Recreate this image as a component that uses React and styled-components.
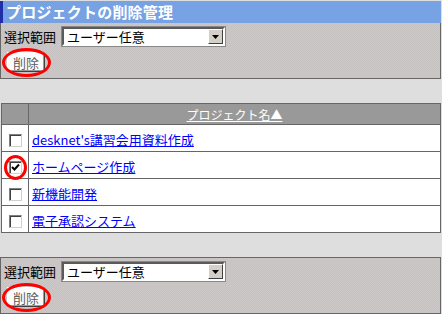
import React from "react";
import styled, { createGlobalStyle } from "styled-components";

const Global = createGlobalStyle`
  html, body { margin: 0; padding: 0; background: #dedede; }
  body { font-family: "Noto Sans CJK JP", "Noto Sans", sans-serif; }
`;

const Page = styled.div`
  width: 441px;
  display: flex;
  flex-direction: column;
`;

const TitleBar = styled.div`
  margin-top: 1px;
  height: 22px;
  border-left: 3px solid #1f2fa8;
  padding-left: 3px;
  background: repeating-conic-gradient(#79a5e5 0 25%, #74a0e1 0 50%) 0 0 / 2px 2px;
  color: #fff;
  font-size: 15px;
  font-weight: bold;
  line-height: 22px;
  letter-spacing: 0.2px;
  white-space: nowrap;
`;

const Panel = styled.div`
  border: 1px solid #666;
  border-top: ${(p) => (p.$closed ? "1px solid #666" : "none")};
  background: repeating-conic-gradient(#ccc8c8 0 25%, #c6c2c2 0 50%) 0 0 / 2px 2px;
  padding: 4px 3px 6px;
  margin-top: ${(p) => (p.$closed ? "24px" : "0")};
  display: flex;
  flex-direction: column;
  gap: 6px;
`;

const FormRow = styled.div`
  display: flex;
  align-items: center;
  gap: 6px;
  height: 19px;
`;

const Label = styled.span`
  font-size: 13px;
  color: #000;
  line-height: 1;
`;

const FakeSelect = styled.div`
  width: 163px;
  height: 19px;
  box-sizing: border-box;
  background: #fff;
  border: 2px solid;
  border-color: #5a5a5a #fff #fff #5a5a5a;
  outline: 1px solid #888;
  display: flex;
  align-items: stretch;
  font-size: 13px;
  color: #000;
`;

const SelectText = styled.span`
  flex: 1;
  padding-left: 3px;
  line-height: 15px;
`;

const SelectArrow = styled.span`
  width: 15px;
  background: #d4d0c8;
  border: 1px solid;
  border-color: #fff #404040 #404040 #fff;
  box-sizing: border-box;
  display: flex;
  align-items: center;
  justify-content: center;
`;

const Circled = styled.div`
  position: relative;
  display: flex;
  align-self: flex-start;
  margin-left: 3px;
`;

const Ring = styled.span`
  position: absolute;
  left: ${(p) => p.$l}px;
  top: ${(p) => p.$t}px;
  width: ${(p) => p.$w}px;
  height: ${(p) => p.$h}px;
  border: 3px solid #ff0000;
  border-radius: 50%;
  box-sizing: border-box;
  pointer-events: none;
`;

const DelButton = styled.button`
  width: 38px;
  height: 20px;
  padding: 0;
  box-sizing: border-box;
  background: #fcfcfc;
  border: 1px solid;
  border-color: #fff #404040 #404040 #fff;
  box-shadow: inset -1px -1px 0 #9a9a9a;
  font-family: "Noto Sans CJK JP", sans-serif;
  font-size: 13px;
  color: #5e5e5e;
  line-height: 1;
`;

const Table = styled.table`
  margin: 24px 0 0 1px;
  width: 440px;
  border-collapse: collapse;
  border: 1px solid #666;
  background: #fff;
`;

const HeadCell = styled.th`
  height: 20px;
  padding: 0;
  background: #999;
  border: 1px solid #666;
  font-weight: normal;
  font-size: 12px;
  color: #fff;
  text-align: center;
  width: ${(p) => (p.$narrow ? "26px" : "auto")};
`;

const HeadLink = styled.a`
  color: #fff;
  text-decoration: underline;
`;

const Cell = styled.td`
  height: 26px;
  padding: 0 0 0 ${(p) => (p.$narrow ? "0" : "3px")};
  border: 1px solid #666;
  text-align: ${(p) => (p.$narrow ? "center" : "left")};
  vertical-align: middle;
`;

const CheckWrap = styled.span`
  position: relative;
  display: inline-flex;
  vertical-align: middle;
`;

const Check = styled.span`
  width: 13px;
  height: 13px;
  box-sizing: border-box;
  border: 1px solid;
  border-color: #808080 #d4d0c8 #d4d0c8 #808080;
  box-shadow: inset 1px 1px 0 #404040;
  background: #fff;
  display: inline-flex;
  align-items: center;
  justify-content: center;
`;

const RowLink = styled.a`
  color: #0000ff;
  text-decoration: underline;
  font-size: 13px;
`;

const projects = [
  { name: "desknet's講習会用資料作成", checked: false },
  { name: "ホームページ作成", checked: true },
  { name: "新機能開発", checked: false },
  { name: "電子承認システム", checked: false },
];

function Controls({ closed }) {
  return (
    <Panel $closed={closed}>
      <FormRow>
        <Label>選択範囲</Label>
        <FakeSelect>
          <SelectText>ユーザー任意</SelectText>
          <SelectArrow>
            <svg width="7" height="4" viewBox="0 0 7 4">
              <path d="M0 0h7L3.5 4z" fill="#000" />
            </svg>
          </SelectArrow>
        </FakeSelect>
      </FormRow>
      <Circled>
        <DelButton>削除</DelButton>
        <Ring $l={-5} $t={-4} $w={49} $h={29} />
      </Circled>
    </Panel>
  );
}

export default function App() {
  return (
    <Page>
      <Global />
      <TitleBar>プロジェクトの削除管理</TitleBar>
      <Controls />
      <Table>
        <thead>
          <tr>
            <HeadCell $narrow />
            <HeadCell>
              <HeadLink href="#">プロジェクト名▲</HeadLink>
            </HeadCell>
          </tr>
        </thead>
        <tbody>
          {projects.map((p) => (
            <tr key={p.name}>
              <Cell $narrow>
                <CheckWrap>
                  <Check>
                    {p.checked && (
                      <svg width="9" height="9" viewBox="0 0 9 9">
                        <path d="M1 4l2.5 2.5L8 1.5" stroke="#000" strokeWidth="2" fill="none" />
                      </svg>
                    )}
                  </Check>
                  {p.checked && <Ring $l={-5} $t={-6} $w={23} $h={25} />}
                </CheckWrap>
              </Cell>
              <Cell>
                <RowLink href="#">{p.name}</RowLink>
              </Cell>
            </tr>
          ))}
        </tbody>
      </Table>
      <Controls closed />
    </Page>
  );
}
